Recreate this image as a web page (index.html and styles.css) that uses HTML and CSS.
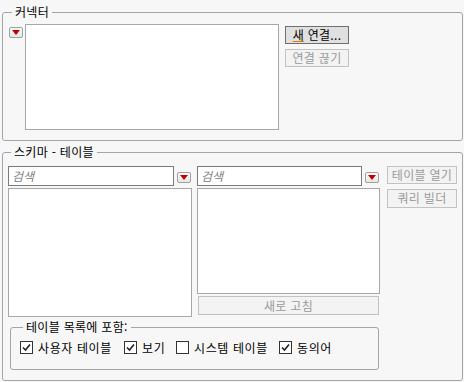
FILE: index.html
```html
<!DOCTYPE html>
<html lang="ko">
<head>
<meta charset="utf-8">
<link rel="stylesheet" href="styles.css">
</head>
<body>
<div class="panel">
  <fieldset class="group connector">
    <legend>커넥터</legend>
    <div class="conn-row">
      <span class="dd dd-conn"><svg width="8" height="5" viewBox="0 0 8 5"><path d="M0 0h8L4 5z" fill="#c00000"/></svg></span>
      <div class="listbox conn-list"></div>
      <div class="conn-buttons">
        <div class="btn btn-default"><span class="mn">새</span> 연결...</div>
        <div class="btn btn-disabled">연결 끊기</div>
      </div>
    </div>
  </fieldset>

  <fieldset class="group schema">
    <legend>스키마 - 테이블</legend>
    <div class="schema-grid">
      <div class="col col-a">
        <div class="search-row">
          <div class="search search-a">검색</div>
          <span class="dd"><svg width="8" height="5" viewBox="0 0 8 5"><path d="M0 0h8L4 5z" fill="#c00000"/></svg></span>
        </div>
        <div class="listbox list-a"></div>
      </div>
      <div class="col col-b">
        <div class="search-row">
          <div class="search search-b">검색</div>
          <span class="dd"><svg width="8" height="5" viewBox="0 0 8 5"><path d="M0 0h8L4 5z" fill="#c00000"/></svg></span>
        </div>
        <div class="listbox list-b"></div>
        <div class="btn btn-disabled refresh">새로 고침</div>
      </div>
      <div class="col col-c">
        <div class="btn btn-disabled side-btn">테이블 열기</div>
        <div class="btn btn-disabled side-btn">쿼리 빌더</div>
      </div>
    </div>
    <fieldset class="group include">
      <legend>테이블 목록에 포함:</legend>
      <div class="checks">
        <label class="chk chk-user"><span class="box on"><svg width="11" height="11" viewBox="0 0 11 11"><path d="M2 5.5l2.5 2.5L9 2.5" fill="none" stroke="#222" stroke-width="1.6"/></svg></span>사용자 테이블</label>
        <label class="chk chk-view"><span class="box on"><svg width="11" height="11" viewBox="0 0 11 11"><path d="M2 5.5l2.5 2.5L9 2.5" fill="none" stroke="#222" stroke-width="1.6"/></svg></span>보기</label>
        <label class="chk chk-sys"><span class="box"></span>시스템 테이블</label>
        <label class="chk"><span class="box on"><svg width="11" height="11" viewBox="0 0 11 11"><path d="M2 5.5l2.5 2.5L9 2.5" fill="none" stroke="#222" stroke-width="1.6"/></svg></span>동의어</label>
      </div>
    </fieldset>
  </fieldset>
</div>
</body>
</html>
```
FILE: styles.css
```css
html, body {
  margin: 0;
  padding: 0;
  background: #f7f7f7;
}
body {
  font-family: "Noto Sans CJK KR", "Noto Sans", sans-serif;
  font-size: 12px;
  color: #000;
  width: 464px;
  height: 382px;
  overflow: hidden;
}
.panel {
  padding: 4px 0 0 2px;
  width: 461px;
  display: flex;
  flex-direction: column;
  gap: 3px;
}
.group {
  margin: 0;
  border: 1px solid #a4a4a4;
  border-radius: 3px;
  box-sizing: border-box;
  min-width: 0;
}
.group legend {
  padding: 0 3px;
  margin-left: 3px;
  line-height: 16px;
  height: 16px;
  font-size: 12px;
  letter-spacing: 0.3px;
}
.connector {
  height: 137px;
  padding: 4px 0 0 6px;
}
.conn-row {
  display: flex;
  align-items: flex-start;
}
.dd {
  width: 14px;
  height: 11px;
  box-sizing: border-box;
  border: 1px solid #a0a0a0;
  border-radius: 2px;
  background: linear-gradient(#fbfbfb, #e6e6e6);
  display: flex;
  align-items: center;
  justify-content: center;
  flex: none;
}
.dd-conn {
  margin-top: 3px;
  margin-right: 2px;
}
.listbox {
  background: #fff;
  border: 1px solid #a7a7a7;
  box-sizing: border-box;
}
.conn-list {
  width: 254px;
  height: 106px;
}
.conn-buttons {
  margin-left: 6px;
  margin-top: 2px;
  display: flex;
  flex-direction: column;
  gap: 5px;
}
.btn {
  box-sizing: border-box;
  height: 18px;
  line-height: 16px;
  text-align: center;
  font-size: 12px;
  white-space: nowrap;
  letter-spacing: 0.3px;
}
.conn-buttons .btn {
  width: 64px;
}
.btn-default {
  border: 1px solid #6f6f6f;
  background: #e0e0e0;
  color: #000;
}
.btn-default .mn {
  text-decoration: underline;
  text-decoration-color: #e08000;
  text-underline-offset: 1px;
}
.btn-disabled {
  border: 1px solid #c2c2c2;
  background: #f3f3f3;
  color: #9a9a9a;
}
.schema {
  height: 237px;
  padding: 6px 0 0 5px;
}
.schema-grid {
  display: flex;
  align-items: flex-start;
}
.col {
  display: flex;
  flex-direction: column;
}
.col-a {
  width: 184px;
}
.col-b {
  width: 183px;
  margin-left: 5px;
}
.col-c {
  margin-left: 7px;
  gap: 5px;
}
.search-row {
  display: flex;
  align-items: flex-start;
  height: 22px;
}
.search {
  box-sizing: border-box;
  height: 20px;
  border: 1px solid #7a7a7a;
  background: #fff;
  color: #808080;
  font-style: italic;
  line-height: 18px;
  padding-left: 3px;
}
.search-a { width: 166px; margin-right: 3px; }
.search-b { width: 165px; margin-right: 3px; }
.search-row .dd { margin-top: 6px; }
.list-a {
  width: 184px;
  height: 129px;
}
.list-b {
  width: 183px;
  height: 106px;
}
.refresh {
  width: 181px;
  height: 19px;
  line-height: 17px;
  margin: 2px 0 0 1px;
}
.side-btn {
  width: 70px;
  height: 18px;
}
.side-btn + .side-btn {
  height: 19px;
}
.include {
  width: 369px;
  height: 51px;
  margin: 2px 0 0 2px;
  padding: 6px 0 0 9px;
}
.include legend {
  margin-left: 3px;
}
.checks {
  display: flex;
  align-items: center;
  height: 13px;
}
.chk {
  display: flex;
  align-items: center;
  line-height: 13px;
  letter-spacing: 0.6px;
  white-space: nowrap;
}
.chk-user { width: 104px; }
.chk-view { width: 52px; }
.chk-sys { width: 103px; }
.box {
  width: 13px;
  height: 13px;
  box-sizing: border-box;
  border: 1px solid #333;
  background: #fff;
  margin-right: 5px;
  display: flex;
  align-items: center;
  justify-content: center;
  flex: none;
}
```
